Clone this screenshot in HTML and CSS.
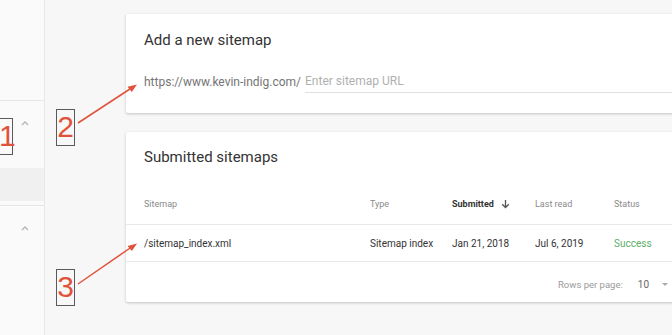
FILE: index.html
```html
<!DOCTYPE html>
<html lang="en">
<head>
    <meta charset="UTF-8">
    <title>Sitemaps</title>
    <link rel="stylesheet" href="styles.css">
</head>
<body>
    <div class="sidebar">
        <div class="side-top"></div>
        <div class="side-group">
            <div class="side-head">
                <svg class="chev" width="8" height="6" viewBox="0 0 8 6"><polyline points="1,5 4,2 7,5" fill="none" stroke="#b5b5b5" stroke-width="1.3"/></svg>
            </div>
            <div class="side-item"></div>
            <div class="side-item active"></div>
        </div>
        <div class="side-group last">
            <div class="side-head">
                <svg class="chev" width="8" height="6" viewBox="0 0 8 6"><polyline points="1,5 4,2 7,5" fill="none" stroke="#b5b5b5" stroke-width="1.3"/></svg>
            </div>
        </div>
    </div>

    <div class="main">
        <div class="card add-card">
            <h2>Add a new sitemap</h2>
            <div class="url-row">
                <span class="domain">https://www.kevin-indig.com/</span>
                <span class="url-input">Enter sitemap URL</span>
            </div>
        </div>

        <div class="card list-card">
            <h2>Submitted sitemaps</h2>
            <div class="table">
                <div class="row head">
                    <div>Sitemap</div>
                    <div>Type</div>
                    <div class="sorted">Submitted
                        <svg width="9" height="10" viewBox="0 0 9 10"><path d="M4.5 1v7.5M1.2 5.2l3.3 3.3 3.3-3.3" fill="none" stroke="#555" stroke-width="1.3"/></svg>
                    </div>
                    <div>Last read</div>
                    <div>Status</div>
                </div>
                <div class="row">
                    <div>/sitemap_index.xml</div>
                    <div>Sitemap index</div>
                    <div>Jan 21, 2018</div>
                    <div>Jul 6, 2019</div>
                    <div class="ok">Success</div>
                </div>
            </div>
            <div class="pager">
                <span>Rows per page:</span>
                <span class="count">10</span>
                <svg width="8" height="5" viewBox="0 0 8 5"><path d="M1 1h6L4 4z" fill="#aaa"/></svg>
            </div>
        </div>
    </div>

    <div class="tag tag-1">1</div>
    <div class="tag tag-2">2</div>
    <div class="tag tag-3">3</div>
    <svg class="arrows" width="672" height="335" viewBox="0 0 672 335">
        <line x1="78" y1="123" x2="133" y2="87" stroke="#e0533b" stroke-width="1.5"/>
        <path d="M137 84.5l-9.5 2.2 4.3 5.2z" fill="#e0533b"/>
        <line x1="78" y1="284" x2="133" y2="246" stroke="#e0533b" stroke-width="1.5"/>
        <path d="M137 243.5l-9.5 2.4 4.4 5.1z" fill="#e0533b"/>
    </svg>
</body>
</html>
```

FILE: styles.css
```css
body {
    margin: 0;
    font-family: Roboto, "Liberation Sans", Arial, sans-serif;
    background-color: #f7f7f7;
    display: flex;
    height: 335px;
    width: 672px;
    overflow: hidden;
    position: relative;
}
.sidebar {
    width: 44px;
    flex-shrink: 0;
    background-color: #fafafa;
    border-right: 1px solid #e8e8e8;
}
.side-top {
    height: 100px;
    border-bottom: 1px solid #e6e6e6;
}
.side-group {
    border-bottom: 1px solid #e6e6e6;
}
.side-group.last {
    border-bottom: none;
}
.side-head {
    height: 44px;
    display: flex;
    justify-content: flex-end;
    align-items: center;
    padding-right: 15px;
}
.side-item {
    height: 23px;
}
.side-item.active {
    height: 33px;
    background-color: #f0f0f0;
    margin-bottom: 4px;
}
.main {
    flex: 1;
    padding: 14px 0 0 81px;
    display: flex;
    flex-direction: column;
    gap: 19px;
}
.card {
    background-color: #fff;
    width: 580px;
    box-shadow: 0 1px 3px rgba(0, 0, 0, 0.22);
    border-radius: 2px;
    box-sizing: border-box;
    padding-left: 18px;
}
.card h2 {
    margin: 0;
    font-size: 15px;
    font-weight: 400;
    color: #333;
}
.add-card {
    height: 99px;
    padding-top: 17px;
}
.url-row {
    display: flex;
    align-items: flex-end;
    margin-top: 25px;
    font-size: 12px;
}
.domain {
    color: #757575;
    padding-bottom: 4px;
}
.url-input {
    flex: 1;
    margin-left: 4px;
    color: #b0b0b0;
    padding-bottom: 4px;
    border-bottom: 1px solid #e0e0e0;
}
.list-card {
    height: 170px;
    padding-top: 16px;
}
.table {
    margin-top: 20px;
    margin-left: -18px;
}
.row {
    display: grid;
    grid-template-columns: 226px 82px 83px 79px 1fr;
    align-items: center;
    box-sizing: border-box;
    height: 37px;
    padding-left: 18px;
    font-size: 10px;
    color: #333;
    border-bottom: 1px solid #e8e8e8;
}
.row.head {
    height: 39px;
    padding-bottom: 3px;
    font-size: 9px;
    color: #8a8a8a;
}
.row.head .sorted {
    color: #333;
    font-weight: 700;
    display: flex;
    align-items: center;
    gap: 7px;
}
.ok {
    color: #5cae6a;
}
.pager {
    display: flex;
    align-items: center;
    padding-top: 17px;
    padding-left: 414px;
    font-size: 9.5px;
    color: #9a9a9a;
}
.pager .count {
    color: #666;
    margin-left: 15px;
    margin-right: 12px;
    font-size: 10px;
}
.tag {
    position: absolute;
    box-sizing: border-box;
    border: 1.5px solid #5a5a5a;
    color: #e0533b;
    font-family: "Liberation Sans", Arial, sans-serif;
    font-size: 30px;
    line-height: 34px;
    width: 19px;
    height: 37px;
    text-align: center;
}
.tag-1 {
    left: -2px;
    top: 118px;
    width: 15px;
}
.tag-2 {
    left: 56px;
    top: 109px;
}
.tag-3 {
    left: 56px;
    top: 269px;
}
.arrows {
    position: absolute;
    left: 0;
    top: 0;
    pointer-events: none;
}
```
